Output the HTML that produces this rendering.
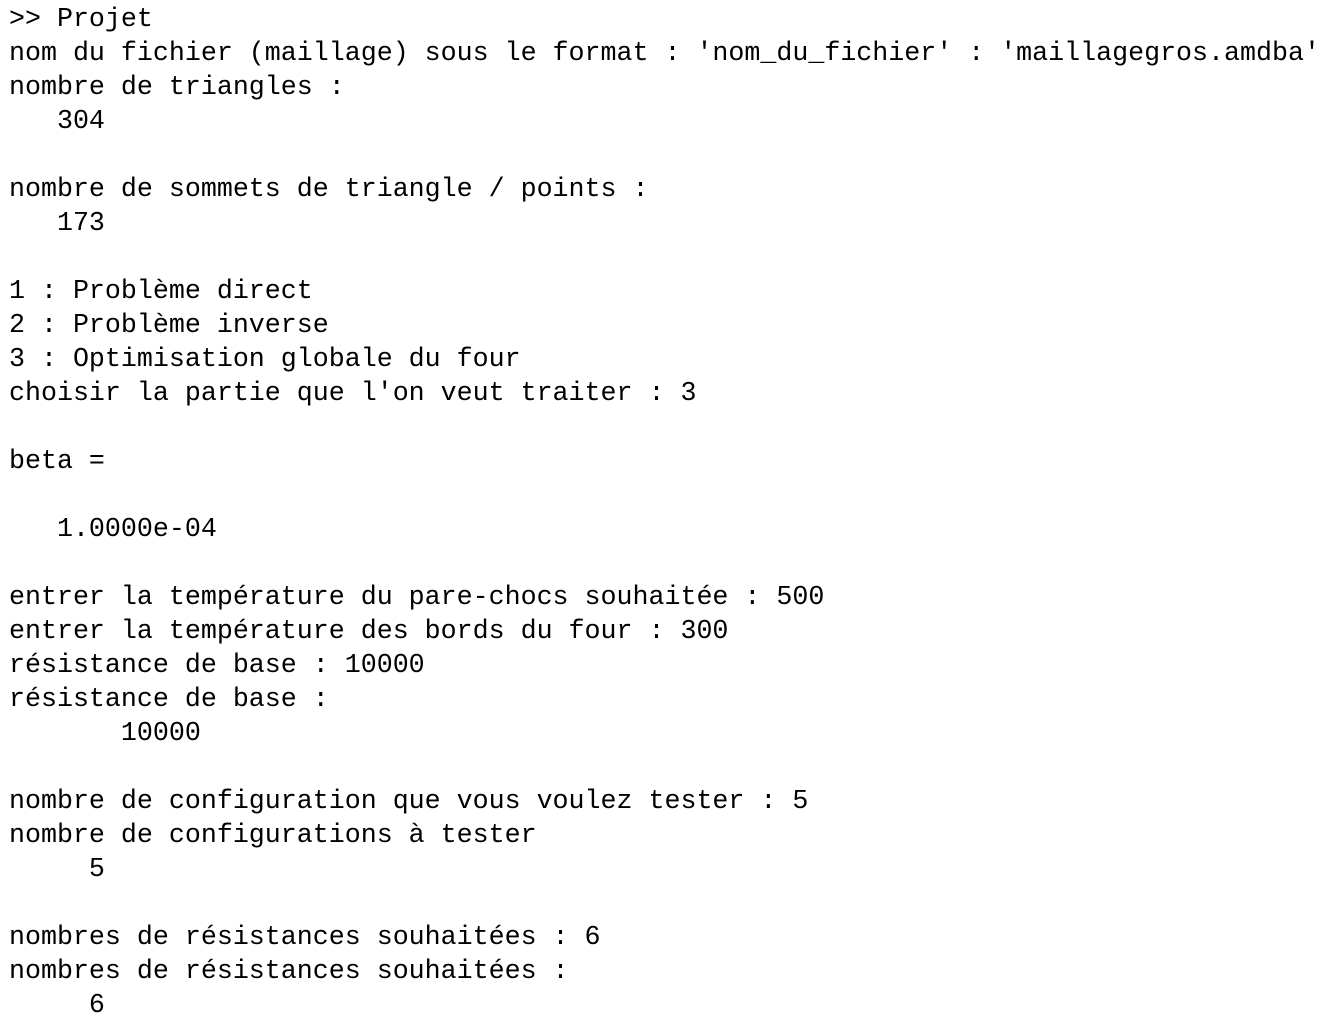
<!DOCTYPE html>
<html><head><meta charset="utf-8"><style>
html,body{margin:0;padding:0;background:#fff;width:1328px;height:1024px;overflow:hidden}
pre{margin:0;position:absolute;left:9px;top:3px;font-family:"Liberation Mono","DejaVu Sans Mono",monospace;font-size:26.65px;line-height:34px;color:#000}
</style></head><body><pre>&gt;&gt; Projet
nom du fichier (maillage) sous le format : 'nom_du_fichier' : 'maillagegros.amdba'
nombre de triangles :
   304

nombre de sommets de triangle / points :
   173

1 : Problème direct
2 : Problème inverse
3 : Optimisation globale du four
choisir la partie que l'on veut traiter : 3

beta =

   1.0000e-04

entrer la température du pare-chocs souhaitée : 500
entrer la température des bords du four : 300
résistance de base : 10000
résistance de base :
       10000

nombre de configuration que vous voulez tester : 5
nombre de configurations à tester
     5

nombres de résistances souhaitées : 6
nombres de résistances souhaitées :
     6</pre></body></html>
